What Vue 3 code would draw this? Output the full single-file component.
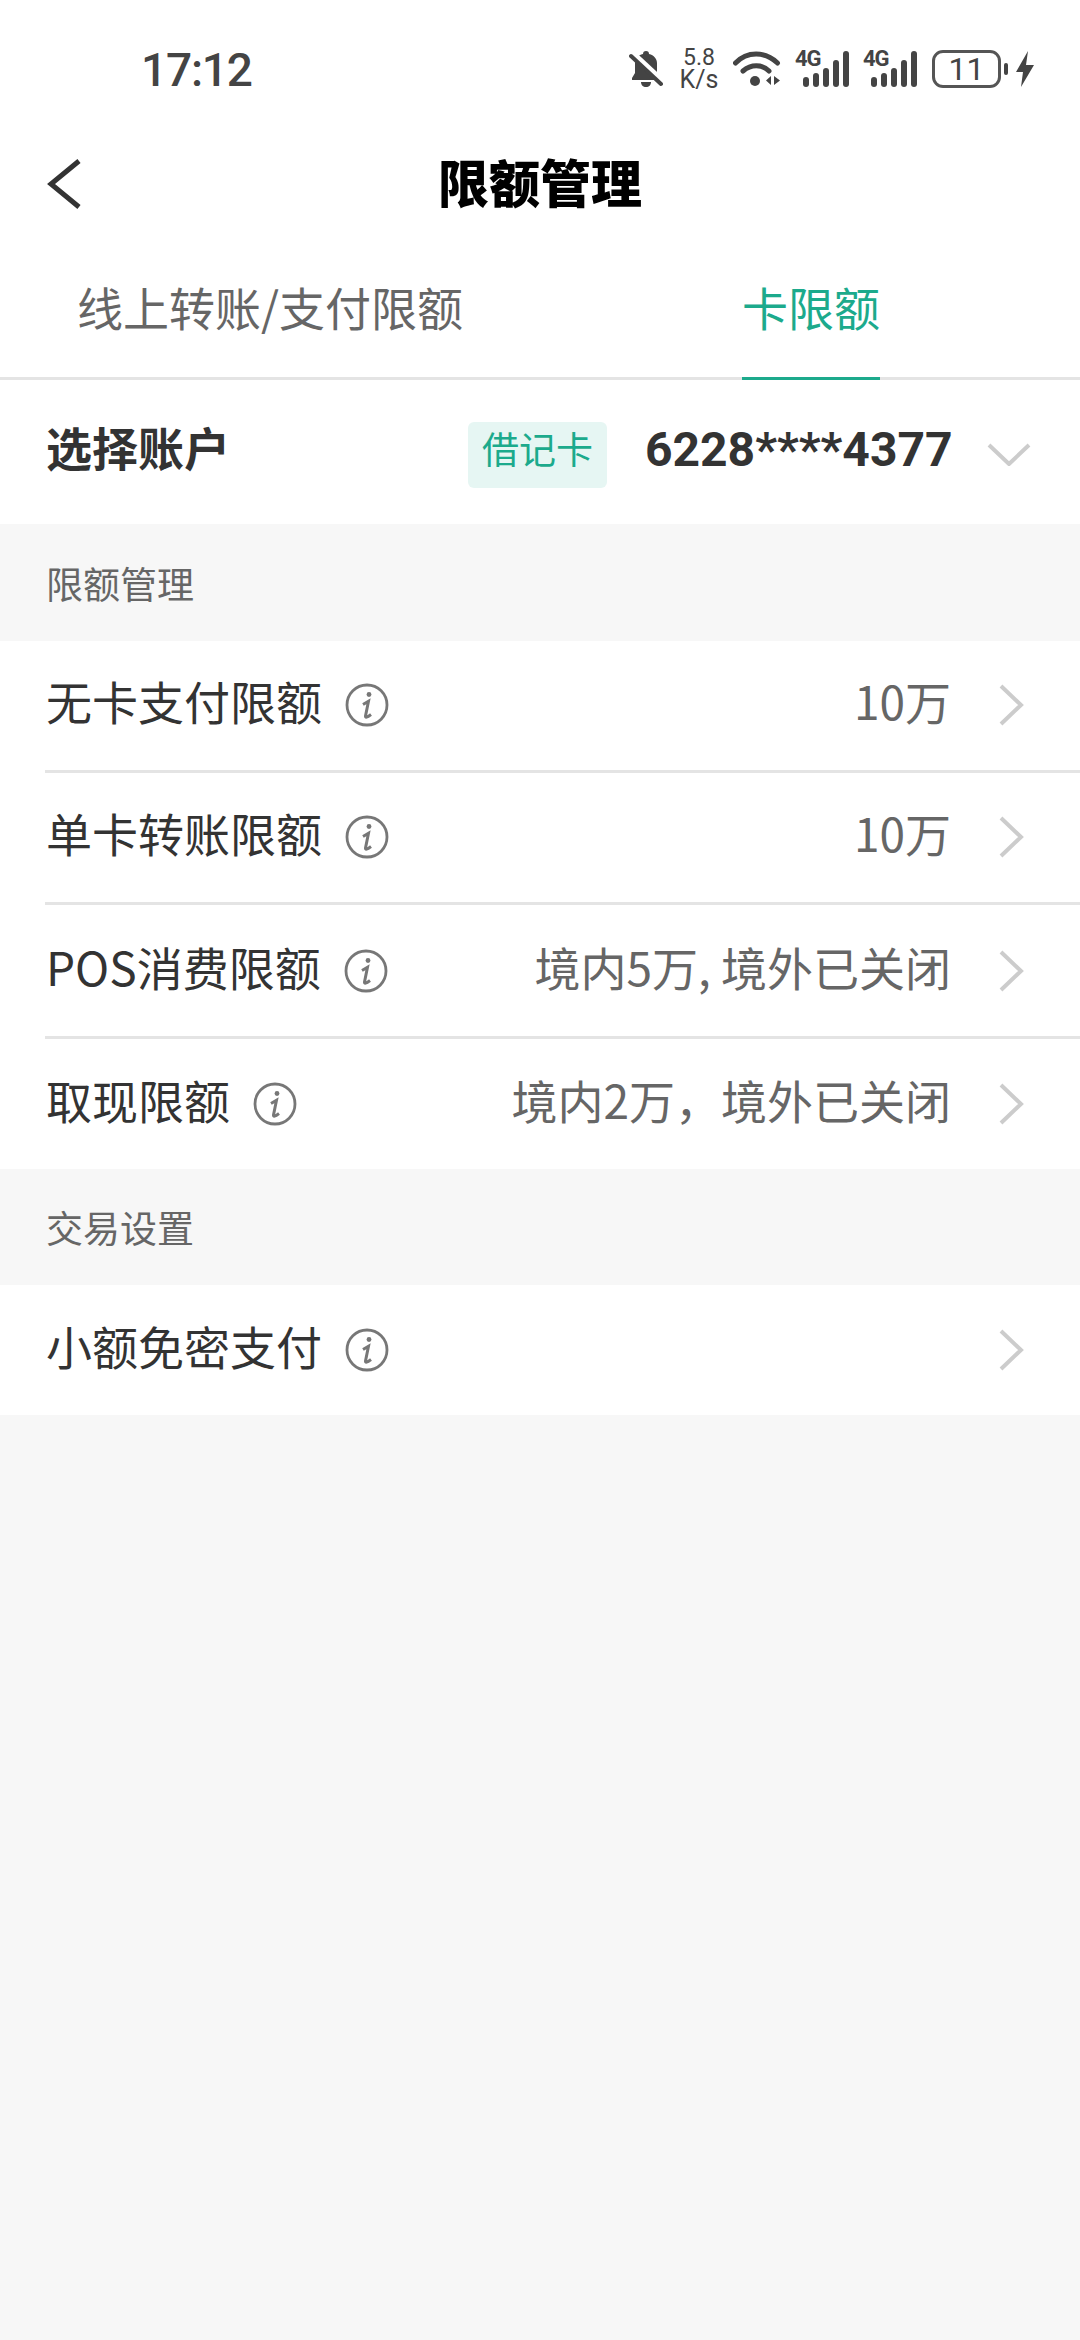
<template>
  <div class="page">
    <div class="status">
      <span class="time">17:12</span>
      <div class="status-icons">
        <svg class="ic-bell" width="34" height="38" viewBox="0 0 34 38">
          <path d="M17 1c-2 0-3 1-3 3-5 1-8 5-8 10v9l-3 5v2h27v-2l-2-4V13c0-4-3-8-8-9 0-2-1-3-3-3z" fill="#444"/>
          <path d="M12 32h10c0 3-2 5-5 5s-5-2-5-5z" fill="#444"/>
          <path d="M3 2l31 29" stroke="#fff" stroke-width="5"/>
          <path d="M2 6l30 28" stroke="#444" stroke-width="4" stroke-linecap="round"/>
        </svg>
        <div class="speed"><span class="sp1">5.8</span><span class="sp2">K/s</span></div>
        <svg class="ic-wifi" width="48" height="38" viewBox="0 0 48 38">
          <path d="M2.500 13C14 1 32 1 44.500 13" fill="none" stroke="#444" stroke-width="5" stroke-linecap="round"/>
          <path d="M10 21c8-7 19-7 26 0" fill="none" stroke="#444" stroke-width="5" stroke-linecap="round"/>
          <circle cx="22" cy="31" r="5" fill="#444"/>
          <path d="M38 26v9l-5-4.500zM41 26v9l6-4.500z" fill="#444"/>
        </svg>
        <div v-for="n in 2" :key="n" class="signal">
          <span class="g4">4G</span>
          <i v-for="h in bars" :key="h" :style="{ height: h + 'px' }"></i>
        </div>
        <div class="battery"><span>11</span></div>
        <i class="nub"></i>
        <svg class="ic-bolt" width="20" height="38" viewBox="0 0 20 38">
          <path d="M13 1L1 22h7l-2 15L19 15h-8z" fill="#444"/>
        </svg>
      </div>
    </div>

    <header class="nav">
      <svg class="back" width="36" height="52" viewBox="0 0 36 52">
        <path d="M33 3L5 26l28 23" fill="none" stroke="#333" stroke-width="5"/>
      </svg>
      <h1>限额管理</h1>
    </header>

    <div class="tabs">
      <div class="tab left">线上转账/支付限额</div>
      <div class="tab right"><span class="on">卡限额</span></div>
    </div>

    <div class="account">
      <span class="acc-label">选择账户</span>
      <span class="tag">借记卡</span>
      <span class="card-no">6228****4377</span>
      <svg class="down" width="44" height="24" viewBox="0 0 44 24">
        <path d="M2 3l20 19L42 3" fill="none" stroke="#ccc" stroke-width="4"/>
      </svg>
    </div>

    <div class="section">限额管理</div>
    <div class="list">
      <div
        v-for="row in limits"
        :key="row.name"
        class="row"
        :style="{ height: row.h + 'px', paddingBottom: row.pb + 'px' }"
      >
        <span class="name">{{ row.name }}</span>
        <svg class="info" width="44" height="44" viewBox="0 0 44 44">
          <circle cx="22" cy="22" r="20" fill="none" stroke="#777" stroke-width="2.800"/>
          <circle cx="24" cy="11.500" r="2.400" fill="#777"/>
          <path d="M18 21.500l5.500-3.200L20.500 33q-.5 3 5.500-1.500" fill="none" stroke="#777" stroke-width="3"/>
        </svg>
        <span class="val">{{ row.value }}</span>
        <svg class="more" width="27" height="44" viewBox="0 0 27 44">
          <path d="M3 3l20 19L3 41" fill="none" stroke="#ccc" stroke-width="4"/>
        </svg>
      </div>
    </div>

    <div class="section second">交易设置</div>
    <div class="list">
      <div class="row single">
        <span class="name">小额免密支付</span>
        <svg class="info" width="44" height="44" viewBox="0 0 44 44">
          <circle cx="22" cy="22" r="20" fill="none" stroke="#777" stroke-width="2.800"/>
          <circle cx="24" cy="11.500" r="2.400" fill="#777"/>
          <path d="M18 21.500l5.500-3.200L20.500 33q-.5 3 5.500-1.500" fill="none" stroke="#777" stroke-width="3"/>
        </svg>
        <span class="val"></span>
        <svg class="more" width="27" height="44" viewBox="0 0 27 44">
          <path d="M3 3l20 19L3 41" fill="none" stroke="#ccc" stroke-width="4"/>
        </svg>
      </div>
    </div>
  </div>
</template>

<script setup>
const bars = [10, 14, 19, 27, 36]
const limits = [
  { name: '无卡支付限额', value: '10万', h: 132, pb: 4 },
  { name: '单卡转账限额', value: '10万', h: 132, pb: 4 },
  { name: 'POS消费限额', value: '境内5万, 境外已关闭', h: 134, pb: 2 },
  { name: '取现限额', value: '境内2万，境外已关闭', h: 130, pb: 0 },
]
</script>

<style>
html, body { margin: 0; background: #f7f7f7; }
</style>

<style scoped>
.page {
  width: 1080px; height: 2340px; background: #f7f7f7; overflow: hidden;
  font-family: "Noto Sans CJK SC", "Noto Sans", sans-serif; color: #333;
}
.status {
  height: 132px; background: #fff; display: flex; align-items: center;
  justify-content: space-between; padding: 6px 45px 0 141px; box-sizing: border-box;
}
.time { font-family: "Roboto", sans-serif; font-size: 46px; font-weight: 500; letter-spacing: -1.2px; color: #444; padding-top: 2px; }
.status-icons { display: flex; align-items: center; }
.speed {
  display: flex; flex-direction: column; align-items: center; width: 36px; margin: 0 16px 0 18px;
  font-family: "Roboto", sans-serif; color: #444; line-height: 22px;
}
.sp1 { font-size: 23px; }
.sp2 { font-size: 25px; }
.signal {
  display: flex; align-items: flex-end; gap: 4px; height: 36px; margin-left: 14px;
  position: relative; width: 54px; justify-content: flex-end;
}
.signal i { width: 6px; background: #444; border-radius: 3px; }
.g4 { position: absolute; left: 0; top: -2px; font: bold 22px/20px "Roboto", sans-serif; letter-spacing: -1px; color: #444; }
.battery {
  width: 69px; height: 38px; border: 3px solid #555; border-radius: 11px; margin-left: 15px;
  box-sizing: border-box; display: flex; align-items: center; justify-content: center;
  font: 32px/1 "Roboto", sans-serif; color: #444;
}
.nub { width: 4px; height: 12px; background: #444; border-radius: 2px; margin: 0 7px 0 3px; }
.nav { height: 106px; background: #fff; display: flex; align-items: center; justify-content: center; position: relative; padding-bottom: 8px; box-sizing: border-box; }
.nav h1 { margin: 0; font-size: 51px; font-weight: 900; color: #000; line-height: 1; }
.back { position: absolute; left: 46px; top: 26px; }
.tabs { height: 139px; display: flex; background: #fff; border-bottom: 3px solid #e4e4e4; }
.tab { font-size: 46px; color: #666; display: flex; height: 139px; box-sizing: border-box; }
.tab.left { width: 742px; padding: 0 0 3px 77px; align-items: center; }
.on {
  color: #1caa8c; height: 142px; display: flex; align-items: center; box-sizing: border-box;
  border-bottom: 3px solid #1caa8c; width: 138px; padding-bottom: 3px;
}
.account { height: 144px; background: #fff; display: flex; align-items: center; padding-left: 46px; }
.acc-label { font-size: 46px; font-weight: 700; color: #333; width: 422px; padding-bottom: 12px; }
.tag {
  width: 139px; height: 66px; background: #e6f6f3; color: #1caa8c; font-size: 37px; border-radius: 6px;
  display: flex; align-items: center; justify-content: center; margin-top: 6px; padding-bottom: 15px;
  box-sizing: border-box;
}
.card-no { font: bold 48px/1 "Roboto", sans-serif; color: #333; margin-left: 38px; width: 306px; padding-bottom: 4px; }
.down { margin-left: 36px; margin-top: 3px; }
.section { height: 117px; display: flex; align-items: center; padding-left: 46px; font-size: 37px; color: #666; }
.section.second { height: 116px; }
.list { background: #fff; }
.row { display: flex; align-items: center; position: relative; padding-left: 46px; box-sizing: border-box; }
.row:not(:last-child)::after { content: ""; position: absolute; left: 45px; right: 0; bottom: 0; height: 3px; background: #e4e4e4; }
.row.single { height: 130px; }
.name { font-size: 46px; color: #333; padding-bottom: 10px; }
.info { margin-left: 23px; }
.val { flex: 1; text-align: right; font-size: 46px; color: #666; padding: 0 47px 10px 0; }
.more { margin-right: 55px; }
</style>
